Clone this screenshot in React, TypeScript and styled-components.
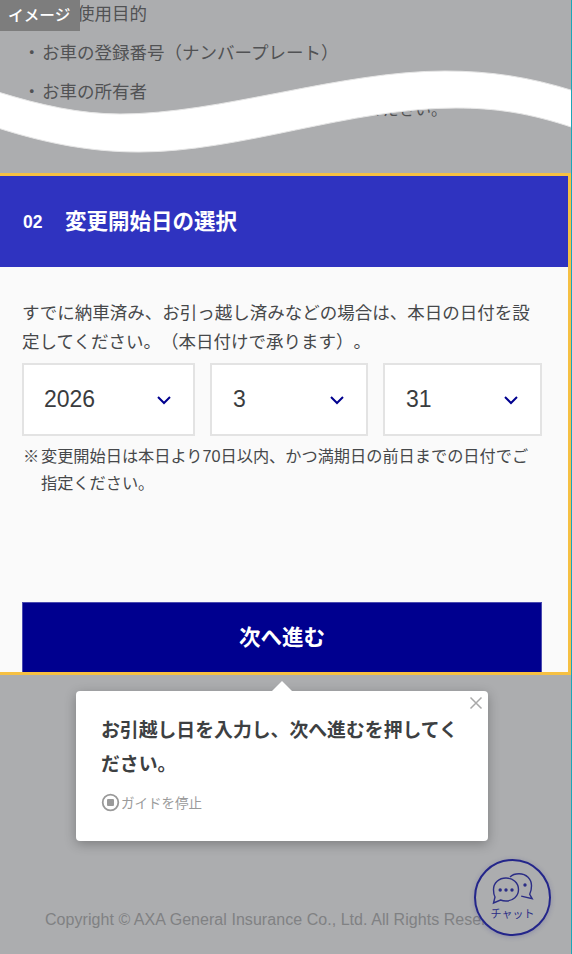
import styled, { createGlobalStyle } from "styled-components";

const GlobalStyle = createGlobalStyle`
  html, body {
    margin: 0;
    padding: 0;
  }
  body {
    font-family: "Liberation Sans", "Noto Sans CJK JP", sans-serif;
    background: #acadaf;
    text-spacing-trim: space-all;
  }
  * {
    box-sizing: border-box;
  }
`;

const Page = styled.div`
  position: relative;
  width: 572px;
  height: 954px;
  overflow: hidden;
  background: #acadaf;
  border-right: 1px solid #1ba6b8;
  display: flex;
  flex-direction: column;
`;

const Background = styled.ul`
  list-style: none;
  margin: 0;
  padding: 0 0 0 28px;
  height: 173px;
  flex: none;
  color: #515254;
  font-size: 17.5px;
`;

const BackgroundRow = styled.li`
  height: 39px;
  line-height: 28px;
  display: flex;

  &::before {
    content: "・";
    width: 14px;
    flex: none;
    margin-left: -5px;
    margin-right: 5px;
  }
`;

const BackgroundNote = styled.li`
  margin-top: -19px;
  padding-left: 291px;
  line-height: 24px;
  font-size: 16px;
  color: #515254;
`;

const ImageBadge = styled.div`
  position: absolute;
  left: 0;
  top: 0;
  width: 80px;
  height: 31px;
  background: #7d7d7d;
  color: #fff;
  font-size: 15.7px;
  font-weight: 500;
  line-height: 31px;
  padding-left: 8px;
`;

const WaveSvg = styled.svg`
  position: absolute;
  left: 0;
  top: 60px;
  width: 572px;
  height: 100px;
`;

const Panel = styled.section`
  height: 502px;
  flex: none;
  width: 571px;
  border: 3px solid #f6c043;
  border-left: none;
  background: #fafafa;
  display: flex;
  flex-direction: column;
`;

const PanelHeader = styled.h2`
  margin: 0;
  height: 91px;
  flex: none;
  background: #2f33c0;
  color: #fff;
  display: flex;
  align-items: center;
  padding: 0 0 4px 23px;
  font-weight: 700;
`;

const StepNumber = styled.span`
  font-size: 17.5px;
  width: 42px;
  margin-top: 6px;
`;

const StepTitle = styled.span`
  font-size: 21.5px;
`;

const PanelBody = styled.div`
  flex: 1;
  display: flex;
  flex-direction: column;
  padding: 32px 26px 0 22px;
`;

const Lead = styled.p`
  margin: 0 0 6px;
  font-size: 17.5px;
  line-height: 29px;
  color: #46484a;
  white-space: nowrap;
`;

const DateRow = styled.div`
  display: grid;
  grid-template-columns: 173px 158px 159px;
  column-gap: 15px;
`;

const DateSelect = styled.div<{ $inset: number }>`
  height: 73px;
  background: #fff;
  border: 2px solid #e3e3e3;
  display: flex;
  align-items: center;
  justify-content: space-between;
  padding: 0 21px 0 ${(p) => p.$inset}px;
  font-size: 23px;
  color: #3a3c3e;
`;

const Note = styled.div`
  margin: 7px 0 0 1px;
  display: flex;
  font-size: 16.2px;
  line-height: 26.5px;
  color: #46484a;
  white-space: nowrap;
`;

const NoteMark = styled.span`
  width: 18px;
  flex: none;
`;

const NextButton = styled.button`
  margin-top: auto;
  height: 70px;
  flex: none;
  border: 1px solid #4a4ab0;
  border-bottom: none;
  padding: 0 0 5px;
  background: #00008f;
  color: #fff;
  font-family: inherit;
  font-size: 21.5px;
  font-weight: 700;
`;

const Guide = styled.aside`
  position: absolute;
  left: 76px;
  top: 691px;
  width: 412px;
  height: 150px;
  background: #fff;
  border-radius: 4px;
  box-shadow: 0 3px 12px rgba(0, 0, 0, 0.28);
  padding: 23px 25px 0;

  &::before {
    content: "";
    position: absolute;
    left: 196px;
    top: -10px;
    border-left: 10px solid transparent;
    border-right: 10px solid transparent;
    border-bottom: 10px solid #fff;
  }
`;

const GuideClose = styled.svg`
  position: absolute;
  right: 5px;
  top: 5px;
  width: 14px;
  height: 14px;
`;

const GuideText = styled.p`
  margin: 0;
  font-size: 18.85px;
  font-weight: 700;
  line-height: 34px;
  color: #3d4042;
`;

const GuideStop = styled.div`
  margin-top: 10px;
  display: flex;
  align-items: center;
  gap: 1px;
  font-size: 13.5px;
  color: #9a9a9a;
`;

const Copyright = styled.footer`
  margin-top: 235px;
  padding-left: 45px;
  font-size: 16px;
  letter-spacing: 0.05px;
  line-height: 20px;
  color: #808183;
  white-space: nowrap;
`;

const ChatButton = styled.div`
  position: absolute;
  left: 474px;
  top: 859px;
  width: 77px;
  height: 77px;
  border-radius: 50%;
  border: 2px solid #23258a;
  background: #acadaf;
  box-shadow: 0 1px 5px rgba(35, 37, 138, 0.25);
  display: flex;
  flex-direction: column;
  align-items: center;
  padding-top: 12px;
  color: #2b2d86;
`;

const ChatLabel = styled.span`
  font-size: 11px;
  line-height: 13px;
  margin-top: 3px;
`;

const Chevron = () => (
  <svg width="16" height="10" viewBox="0 0 16 10" fill="none">
    <path d="M2 2l6 6 6-6" stroke="#00008f" strokeWidth="2" />
  </svg>
);

const dates = [
  { value: "2026", inset: 20 },
  { value: "3", inset: 21 },
  { value: "31", inset: 21 },
];

export default function App() {
  return (
    <Page>
      <GlobalStyle />
      <Background>
        <BackgroundRow>お車使用目的</BackgroundRow>
        <BackgroundRow>お車の登録番号（ナンバープレート）</BackgroundRow>
        <BackgroundRow>お車の所有者</BackgroundRow>
        <BackgroundNote>ご確認ください。</BackgroundNote>
      </Background>
      <ImageBadge>イメージ</ImageBadge>
      <WaveSvg viewBox="0 60 572 100">
        <path
          d="M-2 92C40 105 80 114 120 114C220 114 340 71 445 71C490 71 530 77 574 91L574 128C530 113 495 108 456 108C350 108 240 152 139 152C90 152 45 143 -2 128Z"
          fill="#fff"
          stroke="#e6e6e6"
          strokeWidth="1"
        />
      </WaveSvg>
      <Panel>
        <PanelHeader>
          <StepNumber>02</StepNumber>
          <StepTitle>変更開始日の選択</StepTitle>
        </PanelHeader>
        <PanelBody>
          <Lead>
            すでに納車済み、お引っ越し済みなどの場合は、本日の日付を設
            <br />
            定してください。（本日付けで承ります）。
          </Lead>
          <DateRow>
            {dates.map((d) => (
              <DateSelect key={d.value} $inset={d.inset}>
                {d.value}
                <Chevron />
              </DateSelect>
            ))}
          </DateRow>
          <Note>
            <NoteMark>※</NoteMark>
            <span>
              変更開始日は本日より70日以内、かつ満期日の前日までの日付でご
              <br />
              指定ください。
            </span>
          </Note>
          <NextButton>次へ進む</NextButton>
        </PanelBody>
      </Panel>
      <Copyright>Copyright © AXA General Insurance Co., Ltd. All Rights Reserved.</Copyright>
      <Guide>
        <GuideClose viewBox="0 0 14 14" fill="none">
          <path d="M1.5 1.5l11 11M12.5 1.5l-11 11" stroke="#a9a9a9" strokeWidth="1.5" />
        </GuideClose>
        <GuideText>お引越し日を入力し、次へ進むを押してください。</GuideText>
        <GuideStop>
          <svg width="19" height="19" viewBox="0 0 19 19" fill="none">
            <circle cx="9.5" cy="9.5" r="7.8" stroke="#9a9a9a" strokeWidth="1.8" />
            <rect x="6" y="6" width="7" height="7" rx="1" fill="#9a9a9a" />
          </svg>
          ガイドを停止
        </GuideStop>
      </Guide>
      <ChatButton>
        <svg width="42" height="32" viewBox="0 0 42 32" fill="none" stroke="currentColor" strokeWidth="1.4">
          <path d="M18 4C20 2 23 .8 27 .8c7.500 0 12.500 5.500 12.500 12 0 3.500-.8 6.500-1.800 8.500l2.500 4.500-11-2.700" />
          <path d="M14 5c7 0 12.500 4.800 12.500 11.500S21 28 14 28c-2 0-3.800-.3-5.500-1L1.500 30l1.500-6C1.800 22 1.500 19 1.500 16.500 1.500 9.800 7 5 14 5Z" />
          <circle cx="8.200" cy="17" r="1.700" fill="currentColor" stroke="none" />
          <circle cx="14" cy="17" r="1.700" fill="currentColor" stroke="none" />
          <circle cx="20" cy="17" r="1.700" fill="currentColor" stroke="none" />
          <circle cx="33" cy="12" r="1.700" fill="currentColor" stroke="none" />
        </svg>
        <ChatLabel>チャット</ChatLabel>
      </ChatButton>
    </Page>
  );
}
